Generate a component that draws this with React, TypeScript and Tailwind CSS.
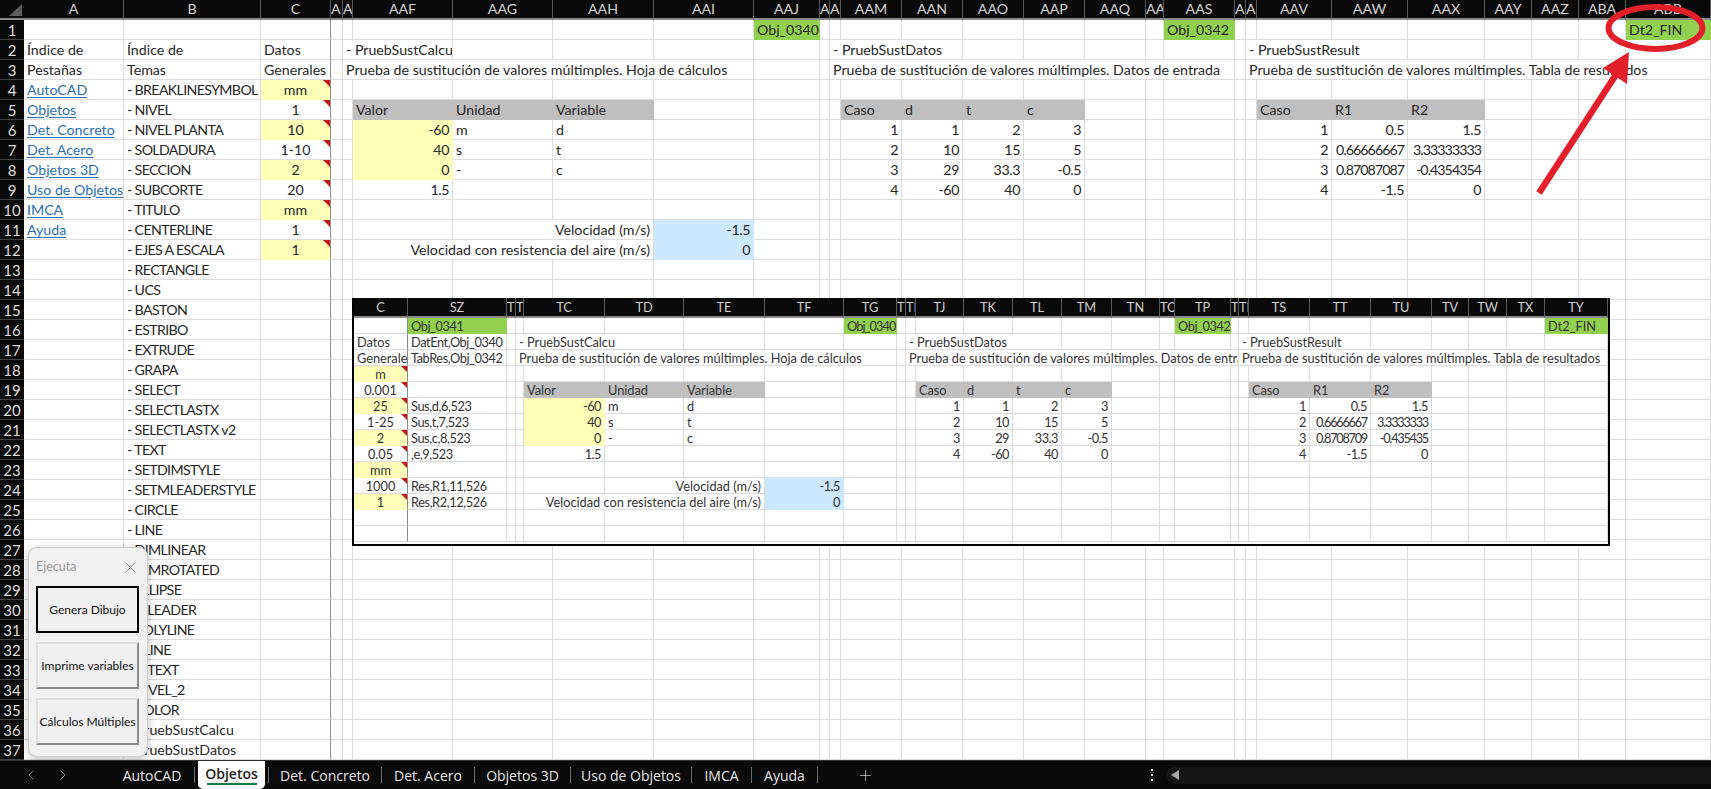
import React from "react";
import { ChevronLeft, ChevronRight, Plus, X } from "lucide-react";

type Cell = { t?: string; cls?: string; span?: number; tri?: boolean; fill?: string };
type Rows = Record<number, Record<number, Cell>>;

const YEL = "bg-[#ffffb8] border-[#ffffb8]";
const GRY = "bg-[#bfbfbf] border-[#bfbfbf]";
const GRN = "bg-[#92d050] border-[#92d050]";
const BLU = "bg-[#cce8ff] border-[#cce8ff]";
const R = "text-right";
const C = "text-center";
const N = "text-right tracking-[-0.4px]";
const NL = "text-right tracking-[-0.95px]";
const EN = "text-right tracking-[-0.5px]";
const ENL = "text-right tracking-[-1.25px]";
const CAPS = "tracking-[-0.65px]";
const TIGHT = "tracking-[-0.4px]";
const TIGHTER = "tracking-[-0.9px]";
const LINK = "text-[#2b6fb5] underline underline-offset-2";

function put(rows: Rows, r: number, c: number, t: string, o: Partial<Cell> = {}) {
  rows[r] = rows[r] || {};
  rows[r][c] = { t, ...o };
}

/* ---------- main sheet data ---------- */
const mainHeads = ["A", "B", "C", "A", "A", "AAF", "AAG", "AAH", "AAI", "AAJ", "A", "A", "AAM", "AAN", "AAO", "AAP", "AAQ", "AA", "AAS", "A", "A", "AAV", "AAW", "AAX", "AAY", "AAZ", "ABA", "ABB"];
const m = { A: 0, B: 1, C: 2, AAE: 4, AAF: 5, AAG: 6, AAH: 7, AAI: 8, AAJ: 9, AAL: 11, AAM: 12, AAN: 13, AAO: 14, AAP: 15, AAS: 18, AAU: 20, AAV: 21, AAW: 22, AAX: 23, ABB: 27 };
const main: Rows = {};
["", "", "AutoCAD", "Objetos", "Det. Concreto", "Det. Acero", "Objetos 3D", "Uso de Objetos", "IMCA", "Ayuda"].forEach((t, i) => {
  if (t) put(main, i + 2, m.A, t, { cls: LINK });
});
put(main, 2, m.A, "Índice de");
put(main, 3, m.A, "Pestañas");
put(main, 2, m.B, "Índice de");
put(main, 3, m.B, "Temas");
["BREAKLINESYMBOL", "NIVEL", "NIVEL PLANTA", "SOLDADURA", "SECCION", "SUBCORTE", "TITULO", "CENTERLINE", "EJES A ESCALA", "RECTANGLE", "UCS", "BASTON", "ESTRIBO", "EXTRUDE", "GRAPA", "SELECT", "SELECTLASTX", "SELECTLASTX v2", "TEXT", "SETDIMSTYLE", "SETMLEADERSTYLE", "CIRCLE", "LINE", "DIMLINEAR", "DIMROTATED", "ELLIPSE", "MLEADER", "POLYLINE", "XLINE", "MTEXT", "NIVEL_2", "COLOR", "PruebSustCalcu", "PruebSustDatos"].forEach((t, i) =>
  put(main, i + 4, m.B, "- " + t, { cls: i < 32 ? CAPS : "" })
);
put(main, 2, m.C, "Datos");
put(main, 3, m.C, "Generales");
["mm", "1", "10", "1-10", "2", "20", "mm", "1", "1"].forEach((t, i) =>
  put(main, i + 4, m.C, t, { cls: C, tri: true, fill: i % 2 === 0 ? YEL : undefined })
);
put(main, 1, m.AAJ, "Obj_0340", { fill: GRN });
put(main, 1, m.AAS, "Obj_0342", { fill: GRN });
put(main, 1, m.ABB, "Dt2_FIN", { fill: GRN });
put(main, 2, m.AAE, "- PruebSustCalcu", { span: 2 });
put(main, 3, m.AAE, "Prueba de sustitución de valores múltimples. Hoja de cálculos", { span: 5 });
put(main, 5, m.AAF, "Valor", { fill: GRY });
put(main, 5, m.AAG, "Unidad", { fill: GRY });
put(main, 5, m.AAH, "Variable", { fill: GRY });
[["-60", "m", "d"], ["40", "s", "t"], ["0", "-", "c"]].forEach((a, i) => {
  put(main, 6 + i, m.AAF, a[0], { cls: N, fill: YEL });
  put(main, 6 + i, m.AAG, a[1]);
  put(main, 6 + i, m.AAH, a[2]);
});
put(main, 9, m.AAF, "1.5", { cls: N });
put(main, 11, m.AAG, "Velocidad (m/s)", { cls: R, span: 2 });
put(main, 11, m.AAI, "-1.5", { cls: N, fill: BLU });
put(main, 12, m.AAF, "Velocidad con resistencia del aire (m/s)", { cls: R, span: 3 });
put(main, 12, m.AAI, "0", { cls: N, fill: BLU });
put(main, 2, m.AAL, "- PruebSustDatos", { span: 3 });
put(main, 3, m.AAL, "Prueba de sustitución de valores múltimples. Datos de entrada", { span: 8 });
["Caso", "d", "t", "c"].forEach((t, i) => put(main, 5, m.AAM + i, t, { fill: GRY }));
[["1", "1", "2", "3"], ["2", "10", "15", "5"], ["3", "29", "33.3", "-0.5"], ["4", "-60", "40", "0"]].forEach((a, i) =>
  a.forEach((t, j) => put(main, 6 + i, m.AAM + j, t, { cls: N }))
);
put(main, 2, m.AAU, "- PruebSustResult", { span: 3 });
put(main, 3, m.AAU, "Prueba de sustitución de valores múltimples. Tabla de resultados", { span: 8 });
["Caso", "R1", "R2"].forEach((t, i) => put(main, 5, m.AAV + i, t, { fill: GRY }));
[["1", "0.5", "1.5"], ["2", "0.66666667", "3.33333333"], ["3", "0.87087087", "-0.4354354"], ["4", "-1.5", "0"]].forEach((a, i) =>
  a.forEach((t, j) => put(main, 6 + i, m.AAV + j, t, { cls: t.length > 6 ? NL : N }))
);

/* ---------- embedded picture data ---------- */
const embHeads = ["C", "SZ", "T", "TI", "TC", "TD", "TE", "TF", "TG", "T", "TI", "TJ", "TK", "TL", "TM", "TN", "TO", "TP", "T", "TI", "TS", "TT", "TU", "TV", "TW", "TX", "TY"];
const embNarrow = [2, 3, 9, 10, 16, 18, 19];
const e = { C: 0, SZ: 1, TB: 3, TC: 4, TD: 5, TE: 6, TF: 7, TG: 8, TI: 10, TJ: 11, TP: 17, TR: 19, TS: 20, TY: 26 };
const emb: Rows = {};
put(emb, 1, e.SZ, "Obj_0341", { fill: GRN, cls: TIGHT });
put(emb, 1, e.TG, "Obj_0340", { fill: GRN, cls: TIGHTER });
put(emb, 1, e.TP, "Obj_0342", { fill: GRN, cls: TIGHT });
put(emb, 1, e.TY, "Dt2_FIN", { fill: GRN });
put(emb, 2, e.C, "Datos");
put(emb, 3, e.C, "Generales");
["m", "0.001", "25", "1-25", "2", "0.05", "mm", "1000", "1"].forEach((t, i) =>
  put(emb, i + 4, e.C, t, { cls: C, tri: true, fill: i % 2 === 0 ? YEL : undefined })
);
put(emb, 2, e.SZ, "DatEnt,Obj_0340", { cls: TIGHT });
put(emb, 3, e.SZ, "TabRes,Obj_0342", { cls: TIGHT });
put(emb, 6, e.SZ, "Sus,d,6,523", { cls: TIGHT });
put(emb, 7, e.SZ, "Sus,t,7,523", { cls: TIGHT });
put(emb, 8, e.SZ, "Sus,c,8,523", { cls: TIGHT });
put(emb, 9, e.SZ, ",e,9,523", { cls: TIGHT });
put(emb, 11, e.SZ, "Res,R1,11,526", { cls: TIGHT });
put(emb, 12, e.SZ, "Res,R2,12,526", { cls: TIGHT });
put(emb, 2, e.TB, "- PruebSustCalcu", { span: 3 });
put(emb, 3, e.TB, "Prueba de sustitución de valores múltimples. Hoja de cálculos", { span: 6 });
put(emb, 5, e.TC, "Valor", { fill: GRY });
put(emb, 5, e.TD, "Unidad", { fill: GRY });
put(emb, 5, e.TE, "Variable", { fill: GRY });
[["-60", "m", "d"], ["40", "s", "t"], ["0", "-", "c"]].forEach((a, i) => {
  put(emb, 6 + i, e.TC, a[0], { cls: EN, fill: YEL });
  put(emb, 6 + i, e.TD, a[1]);
  put(emb, 6 + i, e.TE, a[2]);
});
put(emb, 9, e.TC, "1.5", { cls: EN });
put(emb, 11, e.TD, "Velocidad (m/s)", { cls: R, span: 2 });
put(emb, 11, e.TF, "-1.5", { cls: EN, fill: BLU });
put(emb, 12, e.TC, "Velocidad con resistencia del aire (m/s)", { cls: R, span: 3 });
put(emb, 12, e.TF, "0", { cls: EN, fill: BLU });
put(emb, 2, e.TI, "- PruebSustDatos", { span: 4 });
put(emb, 3, e.TI, "Prueba de sustitución de valores múltimples. Datos de entrada", { span: 9 });
["Caso", "d", "t", "c"].forEach((t, i) => put(emb, 5, e.TJ + i, t, { fill: GRY }));
[["1", "1", "2", "3"], ["2", "10", "15", "5"], ["3", "29", "33.3", "-0.5"], ["4", "-60", "40", "0"]].forEach((a, i) =>
  a.forEach((t, j) => put(emb, 6 + i, e.TJ + j, t, { cls: EN }))
);
put(emb, 2, e.TR, "- PruebSustResult", { span: 3 });
put(emb, 3, e.TR, "Prueba de sustitución de valores múltimples. Tabla de resultados", { span: 8 });
["Caso", "R1", "R2"].forEach((t, i) => put(emb, 5, e.TS + i, t, { fill: GRY }));
[["1", "0.5", "1.5"], ["2", "0.6666667", "3.3333333"], ["3", "0.8708709", "-0.435435"], ["4", "-1.5", "0"]].forEach((a, i) =>
  a.forEach((t, j) => put(emb, 6 + i, e.TS + j, t, { cls: t.length > 6 ? ENL : EN }))
);

const SPAN: Record<number, string> = {
  1: "",
  2: "col-span-2",
  3: "col-span-3",
  4: "col-span-4",
  5: "col-span-5",
  6: "col-span-6",
  7: "col-span-7",
  8: "col-span-8",
  9: "col-span-9",
};

function GridCells({ rows, r, colCount, freeze, size }: { rows: Rows; r: number; colCount: number; freeze: number; size: "lg" | "sm" }) {
  const out: React.ReactNode[] = [];
  const row = rows[r] || {};
  for (let c = 0; c < colCount; c++) {
    const cell = row[c];
    const span = cell?.span ?? 1;
    const colour = cell?.fill ?? "border-[#dcdcdc]";
    const last = c + span - 1;
    out.push(
      <div
        key={c}
        className={`relative overflow-hidden whitespace-nowrap border-r border-b px-[3px] ${colour} ${last === freeze ? "border-r-[#8c8c8c]" : ""} ${SPAN[span]} ${cell?.cls ?? ""}`}
      >
        {cell?.t}
        {cell?.tri && (
          <span className={`absolute top-0 right-0 bg-[#c4161c] [clip-path:polygon(0_0,100%_0,100%_100%)] ${size === "lg" ? "h-[7px] w-[7px]" : "h-[6px] w-[6px]"}`} />
        )}
      </div>
    );
    c += span - 1;
  }
  return <>{out}</>;
}

function MainSheet() {
  const rowNums = Array.from({ length: 37 }, (_, i) => i + 1);
  return (
    <div className="grid grid-cols-[24px_100px_137px_70px_12px_10px_100px_100px_101px_100px_66px_10px_11px_61px_61px_61px_61px_61px_18px_71px_11px_11px_75px_76px_77px_47px_47px_47px_85px] auto-rows-[20px] font-['Lato',sans-serif] text-[14.2px] leading-[20px] text-[#262626]">
      <div className="relative border-b-2 border-[#8a8a8a] bg-[#0a0a0a]">
        <svg className="absolute top-0 left-0" width="24" height="18" viewBox="0 0 24 18">
          <polygon points="9,16 22,16 22,4" fill="#5c5c5c" />
        </svg>
      </div>
      {mainHeads.map((h, i) => (
        <div
          key={i}
          className={`overflow-hidden whitespace-nowrap border-r border-b-2 border-r-[#5a5a5a] border-b-[#8a8a8a] bg-[#0a0a0a] text-[14.2px] leading-[18px] text-[#d2d2d2] ${h.length === 1 && i > 2 ? "text-left" : "text-center"}`}
        >
          {h}
        </div>
      ))}
      {rowNums.map((r) => (
        <React.Fragment key={r}>
          <div className="border-b border-[#444] bg-[#0a0a0a] text-center text-[15px] text-[#dcdcdc]">{r}</div>
          <GridCells rows={main} r={r} colCount={mainHeads.length} freeze={2} size="lg" />
        </React.Fragment>
      ))}
    </div>
  );
}

function EmbeddedPicture() {
  const rowNums = Array.from({ length: 14 }, (_, i) => i + 1);
  return (
    <div className="absolute top-[298px] left-[352px] h-[248px] w-[1258px] overflow-hidden border-x-2 border-b-2 border-black bg-white">
      <div className="grid grid-cols-[54px_99px_9px_8px_81px_79px_81px_79px_53px_9px_10px_48px_49px_49px_50px_48px_15px_56px_8px_10px_61px_61px_61px_37px_38px_38px_63px] grid-rows-[20px] auto-rows-[16px] font-['Lato',sans-serif] text-[12.75px] leading-[16px] text-[#333]">
        {embHeads.map((h, i) => (
          <div
            key={i}
            className={`overflow-hidden whitespace-nowrap border-r border-b-2 border-r-[#5a5a5a] border-b-[#8a8a8a] bg-[#0a0a0a] text-[12.75px] leading-[18px] text-[#cfcfcf] ${embNarrow.includes(i) ? "text-left" : "text-center"}`}
          >
            {h}
          </div>
        ))}
        {rowNums.map((r) => (
          <GridCells key={r} rows={emb} r={r} colCount={embHeads.length} freeze={0} size="sm" />
        ))}
      </div>
    </div>
  );
}

function Dialog() {
  const btn =
    "flex h-[47px] w-[103px] items-center justify-center whitespace-nowrap bg-[#f0f0f0] font-['Lato',sans-serif] text-[12px] text-[#111] border-2";
  return (
    <div className="absolute top-[547px] left-[28px] h-[210px] w-[120px] rounded-[9px] border border-[#cfcfcf] bg-[#f1f1f1] px-[7px] font-['Lato',sans-serif] shadow-[0_2px_8px_rgba(0,0,0,0.25)]">
      <div className="flex h-[38px] items-center justify-between">
        <span className="text-[12.5px] text-[#999]">Ejecuta</span>
        <X size={19} strokeWidth={1} className="text-[#8a8a8a]" />
      </div>
      <div className="flex flex-col gap-[9px]">
        <button className={`${btn} border-black`}>Genera Dibujo</button>
        <button className={`${btn} border-t-[#dedede] border-l-[#dedede] border-r-[#8a8a8a] border-b-[#8a8a8a]`}>Imprime variables</button>
        <button className={`${btn} border-t-[#dedede] border-l-[#dedede] border-r-[#8a8a8a] border-b-[#8a8a8a]`}>Cálculos Múltiples</button>
      </div>
    </div>
  );
}

function TabBar() {
  const tab = "flex h-[16px] items-center justify-center border-r border-[#6a6a6a]";
  return (
    <div className="flex h-[29px] items-center border-t border-[#333] bg-[#0a0a0a] font-['Open_Sans',sans-serif] text-[14px] text-[#e6e6e6]">
      <div className="flex w-[110px] items-center pl-[23px] text-[#7a7a7a]">
        <ChevronLeft size={16} strokeWidth={1.5} />
        <ChevronRight size={16} strokeWidth={1.5} className="ml-[16px]" />
      </div>
      <div className={`${tab} w-[85px]`}>AutoCAD</div>
      <div className="relative ml-[3px] mr-[3px] flex h-[28px] w-[67px] items-start justify-center self-start rounded-b-[5px] bg-white pt-[2px] font-semibold text-[#222]">
        Objetos
        <span className="absolute bottom-[4px] left-[9px] h-[2px] w-[50px] bg-[#107c41]" />
      </div>
      <div className="h-[16px] w-[1px] bg-[#6a6a6a]" />
      <div className={`${tab} w-[113px]`}>Det. Concreto</div>
      <div className={`${tab} w-[93px]`}>Det. Acero</div>
      <div className={`${tab} w-[96px]`}>Objetos 3D</div>
      <div className={`${tab} w-[121px]`}>Uso de Objetos</div>
      <div className={`${tab} w-[60px]`}>IMCA</div>
      <div className={`${tab} w-[66px]`}>Ayuda</div>
      <Plus size={17} strokeWidth={1} className="ml-[39px] text-[#d8d8d8]" />
      <div className="ml-[277px] flex flex-col gap-[3px]">
        <span className="h-[2px] w-[2px] bg-[#e0e0e0]" />
        <span className="h-[2px] w-[2px] bg-[#e0e0e0]" />
        <span className="h-[2px] w-[2px] bg-[#e0e0e0]" />
      </div>
      <div className="ml-[14px] flex h-[17px] flex-1 items-center rounded-l-[8px] bg-[#161616] pl-[4px]">
        <svg width="8" height="10" viewBox="0 0 8 10">
          <polygon points="8,0 8,10 0,5" fill="#a8a8a8" />
        </svg>
      </div>
    </div>
  );
}

export default function App() {
  return (
    <div className="relative flex h-[789px] w-[1711px] flex-col overflow-hidden bg-white">
      <MainSheet />
      <TabBar />
      <EmbeddedPicture />
      <Dialog />
      <svg className="pointer-events-none absolute top-0 left-0" width="1711" height="789" viewBox="0 0 1711 789">
        <ellipse cx="1655.5" cy="28" rx="47" ry="21" fill="none" stroke="#e3202a" strokeWidth="6" />
        <line x1="1539" y1="193" x2="1619" y2="70" stroke="#e3202a" strokeWidth="6.5" />
        <polygon points="1629,52 1603,68 1627,84" fill="#e3202a" />
      </svg>
    </div>
  );
}
